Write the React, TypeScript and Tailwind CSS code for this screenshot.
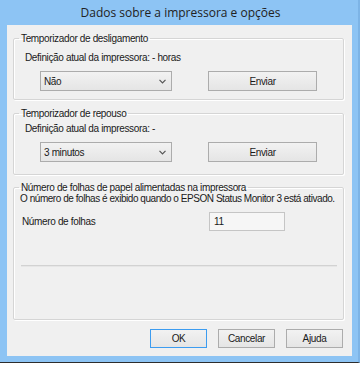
import React from 'react'

const font = "font-['Liberation_Sans',Arial,sans-serif] text-[10px] tracking-[-0.35px] leading-[13px] text-[#1a1a1a]"

const Select = ({ value }: { value: string }) => (
  <div className="ml-[26px] w-[132px] h-[20px] border border-[#acacac] bg-gradient-to-b from-[#f2f2f2] to-[#e5e5e5] flex items-center justify-between pl-[3px] pr-[5px]">
    <span>{value}</span>
    <svg width="7" height="5" viewBox="0 0 7 5" fill="none" stroke="#555" strokeWidth="1.2">
      <path d="M0.5 0.8 L3.5 3.8 L6.5 0.8" />
    </svg>
  </div>
)

const Button = ({ label, className = '', focused = false }: { label: string; className?: string; focused?: boolean }) => (
  <div
    className={
      'flex items-center justify-center bg-gradient-to-b from-[#f2f2f2] to-[#e5e5e5] border ' +
      (focused ? 'border-[#3c9cf0]' : 'border-[#acacac]') +
      ' ' +
      className
    }
  >
    {label}
  </div>
)

const Group = ({ title, className = '', children }: { title: string; className?: string; children: React.ReactNode }) => (
  <fieldset className={'ml-[6px] w-[331px] border border-[#d5d5d5] rounded-[2px] shadow-[inset_1px_1px_0_#fff,1px_1px_0_#fff] ' + className}>
    <legend className="ml-[5px] px-[2px] leading-[13px]">{title}</legend>
    {children}
  </fieldset>
)

const App = () => {
  return (
    <div className={'w-[360px] h-[366px] bg-white ' + font}>
      <div className="h-[363px] bg-[#8dc4f4] border-r-2 border-r-[#7db4e6] border-b border-b-[#2d2d2d] pl-[7px] pr-[6px] pb-[6px] flex flex-col">
        <div className="h-[25px] flex items-center justify-center pl-[2px] font-['Open_Sans',sans-serif] text-[12px] tracking-normal text-[#222]">
          Dados sobre a impressora e opções
        </div>

        <div className="h-[331px] bg-[#f0f0f0] flex flex-col pt-[7px]">
          <Group title="Temporizador de desligamento" className="h-[68px]">
            <p className="pl-[11px] mt-[6px]">Definição atual da impressora: - horas</p>
            <div className="flex items-center mt-[7px]">
              <Select value="Não" />
              <Button label="Enviar" className="ml-[36px] w-[109px] h-[20px]" />
            </div>
          </Group>

          <Group title="Temporizador de repouso" className="h-[68px] mt-[7px]">
            <p className="pl-[11px] mt-[2px]">Definição atual da impressora: -</p>
            <div className="flex items-center mt-[7px]">
              <Select value="3 minutos" />
              <Button label="Enviar" className="ml-[36px] w-[109px] h-[20px]" />
            </div>
          </Group>

          <Group title="Número de folhas de papel alimentadas na impressora" className="h-[139px] mt-[6px]">
            <p className="pl-[6px] -mt-[1px] leading-[11px] tracking-[-0.45px]">O número de folhas é exibido quando o EPSON Status Monitor 3 está ativado.</p>
            <div className="flex items-center mt-[8px]">
              <span className="pl-[8px] w-[195px]">Número de folhas</span>
              <div className="w-[76px] h-[19px] border border-[#c5c5c5] bg-[#f6f6f6] flex items-center pl-[4px]">11</div>
            </div>
            <div className="ml-[7px] mt-[34px] w-[316px] h-[2px] bg-[#d2d2d2] border-b border-b-[#e6e6e6]" />
          </Group>

          <div className="flex justify-end gap-[11px] pr-[9px] mt-[9px]">
            <Button label="OK" focused className="w-[57px] h-[19px]" />
            <Button label="Cancelar" className="w-[57px] h-[19px]" />
            <Button label="Ajuda" className="w-[57px] h-[19px]" />
          </div>
        </div>
      </div>
    </div>
  )
}

export default App
